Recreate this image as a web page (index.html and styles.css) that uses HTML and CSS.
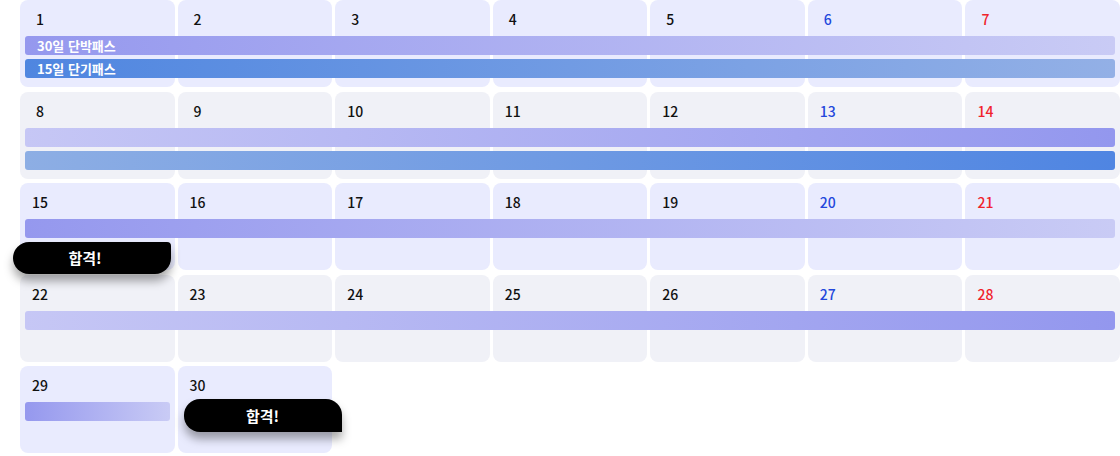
FILE: index.html
```html
<!DOCTYPE html>
<html lang="ko">
<head>
<meta charset="utf-8">
<link rel="stylesheet" href="styles.css">
</head>
<body>
<div class="calendar">
  <div class="week odd">
    <div class="cell"><span class="num">1</span></div>
    <div class="cell"><span class="num">2</span></div>
    <div class="cell"><span class="num">3</span></div>
    <div class="cell"><span class="num">4</span></div>
    <div class="cell"><span class="num">5</span></div>
    <div class="cell"><span class="num sat">6</span></div>
    <div class="cell"><span class="num sun">7</span></div>
    <div class="bars full">
      <div class="bar purple-ltr">30일 단박패스</div>
      <div class="bar blue-ltr">15일 단기패스</div>
    </div>
  </div>
  <div class="week even">
    <div class="cell"><span class="num">8</span></div>
    <div class="cell"><span class="num">9</span></div>
    <div class="cell"><span class="num">10</span></div>
    <div class="cell"><span class="num">11</span></div>
    <div class="cell"><span class="num">12</span></div>
    <div class="cell"><span class="num sat">13</span></div>
    <div class="cell"><span class="num sun">14</span></div>
    <div class="bars full">
      <div class="bar purple-rtl"></div>
      <div class="bar blue-rtl"></div>
    </div>
  </div>
  <div class="week odd raised">
    <div class="cell"><span class="num">15</span></div>
    <div class="cell"><span class="num">16</span></div>
    <div class="cell"><span class="num">17</span></div>
    <div class="cell"><span class="num">18</span></div>
    <div class="cell"><span class="num">19</span></div>
    <div class="cell"><span class="num sat">20</span></div>
    <div class="cell"><span class="num sun">21</span></div>
    <div class="bars full">
      <div class="bar purple-ltr"></div>
    </div>
    <div class="badge badge-a">합격!</div>
  </div>
  <div class="week even">
    <div class="cell"><span class="num">22</span></div>
    <div class="cell"><span class="num">23</span></div>
    <div class="cell"><span class="num">24</span></div>
    <div class="cell"><span class="num">25</span></div>
    <div class="cell"><span class="num">26</span></div>
    <div class="cell"><span class="num sat">27</span></div>
    <div class="cell"><span class="num sun">28</span></div>
    <div class="bars full">
      <div class="bar purple-rtl"></div>
    </div>
  </div>
  <div class="week odd">
    <div class="cell"><span class="num">29</span></div>
    <div class="cell"><span class="num">30</span></div>
    <div class="bars first">
      <div class="bar purple-ltr"></div>
    </div>
    <div class="badge badge-b">합격!</div>
  </div>
</div>
</body>
</html>
```

FILE: styles.css
```css
* { box-sizing: border-box; }
html, body {
  margin: 0;
  padding: 0;
  background: #ffffff;
  font-family: "Noto Sans CJK KR", "Noto Sans", sans-serif;
}
.calendar {
  width: 1120px;
  padding-left: 20px;
  display: flex;
  flex-direction: column;
  gap: 4.5px;
}
.week {
  position: relative;
  display: grid;
  grid-template-columns: repeat(7, minmax(0, 1fr));
  grid-template-rows: 87px;
  column-gap: 3px;
}
.week.raised { z-index: 2; }
.cell {
  grid-row: 1;
  border-radius: 8px;
  padding: 9px 12px 0;
}
.cell:nth-child(1) { grid-column: 1; }
.cell:nth-child(2) { grid-column: 2; }
.cell:nth-child(3) { grid-column: 3; }
.cell:nth-child(4) { grid-column: 4; }
.cell:nth-child(5) { grid-column: 5; }
.cell:nth-child(6) { grid-column: 6; }
.cell:nth-child(7) { grid-column: 7; }
.odd .cell { background: #e9ebfe; }
.even .cell { background: #f0f1f7; }
.num {
  display: block;
  width: 16px;
  text-align: center;
  font-size: 14px;
  line-height: 20px;
  font-weight: 500;
  color: #111111;
}
.num.sat { color: #2347dc; }
.num.sun { color: #f0232c; }
.bars {
  grid-row: 1;
  align-self: start;
  margin: 36px 5px 0;
  display: flex;
  flex-direction: column;
  gap: 4px;
}
.bars.full { grid-column: 1 / -1; }
.bars.first { grid-column: 1 / 2; }
.bar {
  height: 19px;
  border-radius: 3px;
  padding-left: 12px;
  font-size: 13px;
  line-height: 19px;
  font-weight: 700;
  color: #ffffff;
}
.purple-ltr { background: linear-gradient(90deg, #9598ee, #c9cbf5); }
.purple-rtl { background: linear-gradient(90deg, #c6c7f5, #9397ee); }
.blue-ltr { background: linear-gradient(90deg, #4f86e0, #93b0e6); }
.blue-rtl { background: linear-gradient(90deg, #8daee4, #4f85e2); }
.badge {
  position: absolute;
  z-index: 3;
  height: 32px;
  width: 158px;
  background: #000000;
  color: #ffffff;
  font-size: 15px;
  font-weight: 700;
  line-height: 32px;
  text-align: center;
  box-shadow: 0 7px 10px rgba(0, 0, 0, 0.35);
}
.badge-a {
  left: -7px;
  top: 59px;
  border-radius: 16px 4px 16px 16px;
  padding-right: 14px;
}
.badge-b {
  left: 163.5px;
  top: 33px;
  height: 33px;
  line-height: 33px;
  border-radius: 16px 16px 0 16px;
}
```
